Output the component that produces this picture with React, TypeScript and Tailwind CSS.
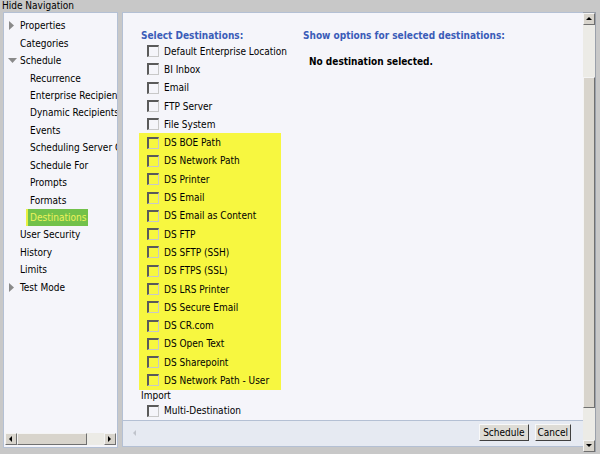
import { ReactElement } from "react";

const navItems: { label: string; level: number; arrow?: "right" | "down"; active?: boolean }[] = [
  { label: "Properties", level: 0, arrow: "right" },
  { label: "Categories", level: 0 },
  { label: "Schedule", level: 0, arrow: "down" },
  { label: "Recurrence", level: 1 },
  { label: "Enterprise Recipients", level: 1 },
  { label: "Dynamic Recipients", level: 1 },
  { label: "Events", level: 1 },
  { label: "Scheduling Server Group", level: 1 },
  { label: "Schedule For", level: 1 },
  { label: "Prompts", level: 1 },
  { label: "Formats", level: 1 },
  { label: "Destinations", level: 1, active: true },
  { label: "User Security", level: 0 },
  { label: "History", level: 0 },
  { label: "Limits", level: 0 },
  { label: "Test Mode", level: 0, arrow: "right" },
];

const plainDest = ["Default Enterprise Location", "BI Inbox", "Email", "FTP Server", "File System"];

const dsDest = [
  "DS BOE Path",
  "DS Network Path",
  "DS Printer",
  "DS Email",
  "DS Email as Content",
  "DS FTP",
  "DS SFTP (SSH)",
  "DS FTPS (SSL)",
  "DS LRS Printer",
  "DS Secure Email",
  "DS CR.com",
  "DS Open Text",
  "DS Sharepoint",
  "DS Network Path - User",
];

const Box = (): ReactElement => (
  <span className="inline-block w-[12px] h-[12px] border-t-[2px] border-l-[2px] border-r border-b border-t-[#5a5a5a] border-l-[#5a5a5a] border-r-[#c8c8c8] border-b-[#c8c8c8] mr-[5px] shrink-0" />
);

const DestRow = (props: { label: string }): ReactElement => (
  <div className="flex items-center h-[18.3px] whitespace-nowrap">
    <Box />
    <span>{props.label}</span>
  </div>
);

const Arrow = (props: { dir: "up" | "down" | "left" | "right"; faint?: boolean }) => {
  const c = props.faint ? "#c0c4cc" : "#000";
  const pts = {
    up: "1,5 4,2 7,5",
    down: "1,2 4,5 7,2",
    left: "5,1 2,4 5,7",
    right: "2,1 5,4 2,7",
  }[props.dir];
  return (
    <svg width="8" height="8" viewBox="0 0 8 8">
      <polygon points={pts} fill={c} />
    </svg>
  );
};

const ScrollBtn = (props: { dir: "up" | "down" | "left" | "right" }) => (
  <div className="w-[12px] h-[12px] shrink-0 bg-[#d8d4cc] border border-[#f4f4f4] border-r-[#707070] border-b-[#707070] flex items-center justify-center">
    <Arrow dir={props.dir} />
  </div>
);

export default function App(): ReactElement {
  return (
    <div
      className="w-[600px] h-[454px] bg-[#c8c8c8] flex flex-col text-[10px] text-black overflow-hidden"
      style={{ fontFamily: "'DejaVu Sans Condensed', 'DejaVu Sans', sans-serif" }}
    >
      <div className="h-[12px] leading-[12px] pl-[2px]">Hide Navigation</div>
      <div className="flex items-start flex-1 pl-[3px]">
        {/* left nav */}
        <div className="w-[115px] h-[436px] bg-[#f5f5fa] border border-[#b4c0d4] flex flex-col">
          <div className="flex-1 pt-[4px] overflow-hidden">
            {navItems.map((it) => (
              <div key={it.label} className="h-[17.45px] flex items-center whitespace-nowrap">
                {it.level === 0 ? (
                  <span className="w-[16px] shrink-0 flex justify-center">
                    {it.arrow === "right" && (
                      <svg width="6" height="9" viewBox="0 0 6 9">
                        <polygon points="0,0 5,4.5 0,9" fill="#8a8a8a" />
                      </svg>
                    )}
                    {it.arrow === "down" && (
                      <svg width="9" height="6" viewBox="0 0 9 6">
                        <polygon points="0,0 9,0 4.5,5" fill="#8a8a8a" />
                      </svg>
                    )}
                  </span>
                ) : (
                  <span className={it.active ? "w-[22px] shrink-0" : "w-[26px] shrink-0"} />
                )}
                {it.active ? (
                  <span className="bg-[#72c14a] text-[#eef25c] pl-[2px] pr-[2px] h-[17px] leading-[17px] border-l-[2px] border-[#e8f040]">
                    {it.label}
                  </span>
                ) : (
                  <span>{it.label}</span>
                )}
              </div>
            ))}
          </div>
          <div className="h-[14px] flex items-center px-[1px] mb-[1px]">
            <ScrollBtn dir="left" />
            <div className="w-[70px] h-[12px] bg-[#d8d4cc] border border-[#f4f4f4] border-r-[#707070] border-b-[#707070]" />
            <div className="flex-1 h-[12px] bg-[#ecebe6]" />
            <ScrollBtn dir="right" />
          </div>
        </div>
        <div className="w-[4px]" />
        {/* right panel */}
        <div className="w-[474px] flex items-start">
          <div className="flex-1 h-[435px] flex flex-col border-t border-l border-[#b4c0d4]">
            <div className="flex-1 bg-[#f5f5fa] flex pl-[16px] pt-[16px] border-b border-[#b4c0d4]">
              <div className="w-[164px]">
                <div className="font-bold text-[#3a5cb8] pl-[2px] h-[13px] leading-[13px]">
                  Select Destinations:
                </div>
                <div className="pl-[8px]">
                  {plainDest.map((d) => (
                    <DestRow key={d} label={d} />
                  ))}
                </div>
                <div className="bg-[#f7f740] w-[142px] pl-[8px]">
                  {dsDest.map((d) => (
                    <DestRow key={d} label={d} />
                  ))}
                </div>
                <div className="pl-[2px] h-[13px] leading-[13px] mt-[-1px]">Import</div>
                <div className="pl-[8px]">
                  <DestRow label="Multi-Destination" />
                </div>
              </div>
              <div>
                <div className="font-bold text-[#3a5cb8] h-[13px] leading-[13px]">
                  Show options for selected destinations:
                </div>
                <div className="font-bold pl-[6px] mt-[13px] leading-[13px]">No destination selected.</div>
              </div>
            </div>
            <div className="h-[29px] bg-[#e6eaf2] flex items-center pl-[8px] pb-[1px] border-b border-[#b4c0d4]">
              <Arrow dir="left" faint />
              <div className="flex-1" />
              <button className="h-[17px] px-[3px] bg-[#dedcd6] border border-[#f8f8f8] border-r-[#404040] border-b-[#404040] leading-[14px] mr-[6px]">
                Schedule
              </button>
              <button className="h-[17px] px-[2px] bg-[#dedcd6] border border-[#f8f8f8] border-r-[#404040] border-b-[#404040] leading-[14px] mr-[12px]">
                Cancel
              </button>
            </div>
          </div>
          <div className="w-[13px] h-[440px] flex flex-col bg-[#ecebe6] border-t border-r border-[#9aa0aa]">
            <ScrollBtn dir="up" />
            <div className="h-[52px]" />
            <div className="h-[331px] bg-[#d8d4cc] border border-[#f4f4f4] border-r-[#707070] border-b-[#707070]" />
            <div className="flex-1" />
            <ScrollBtn dir="down" />
          </div>
        </div>
      </div>
    </div>
  );
}
